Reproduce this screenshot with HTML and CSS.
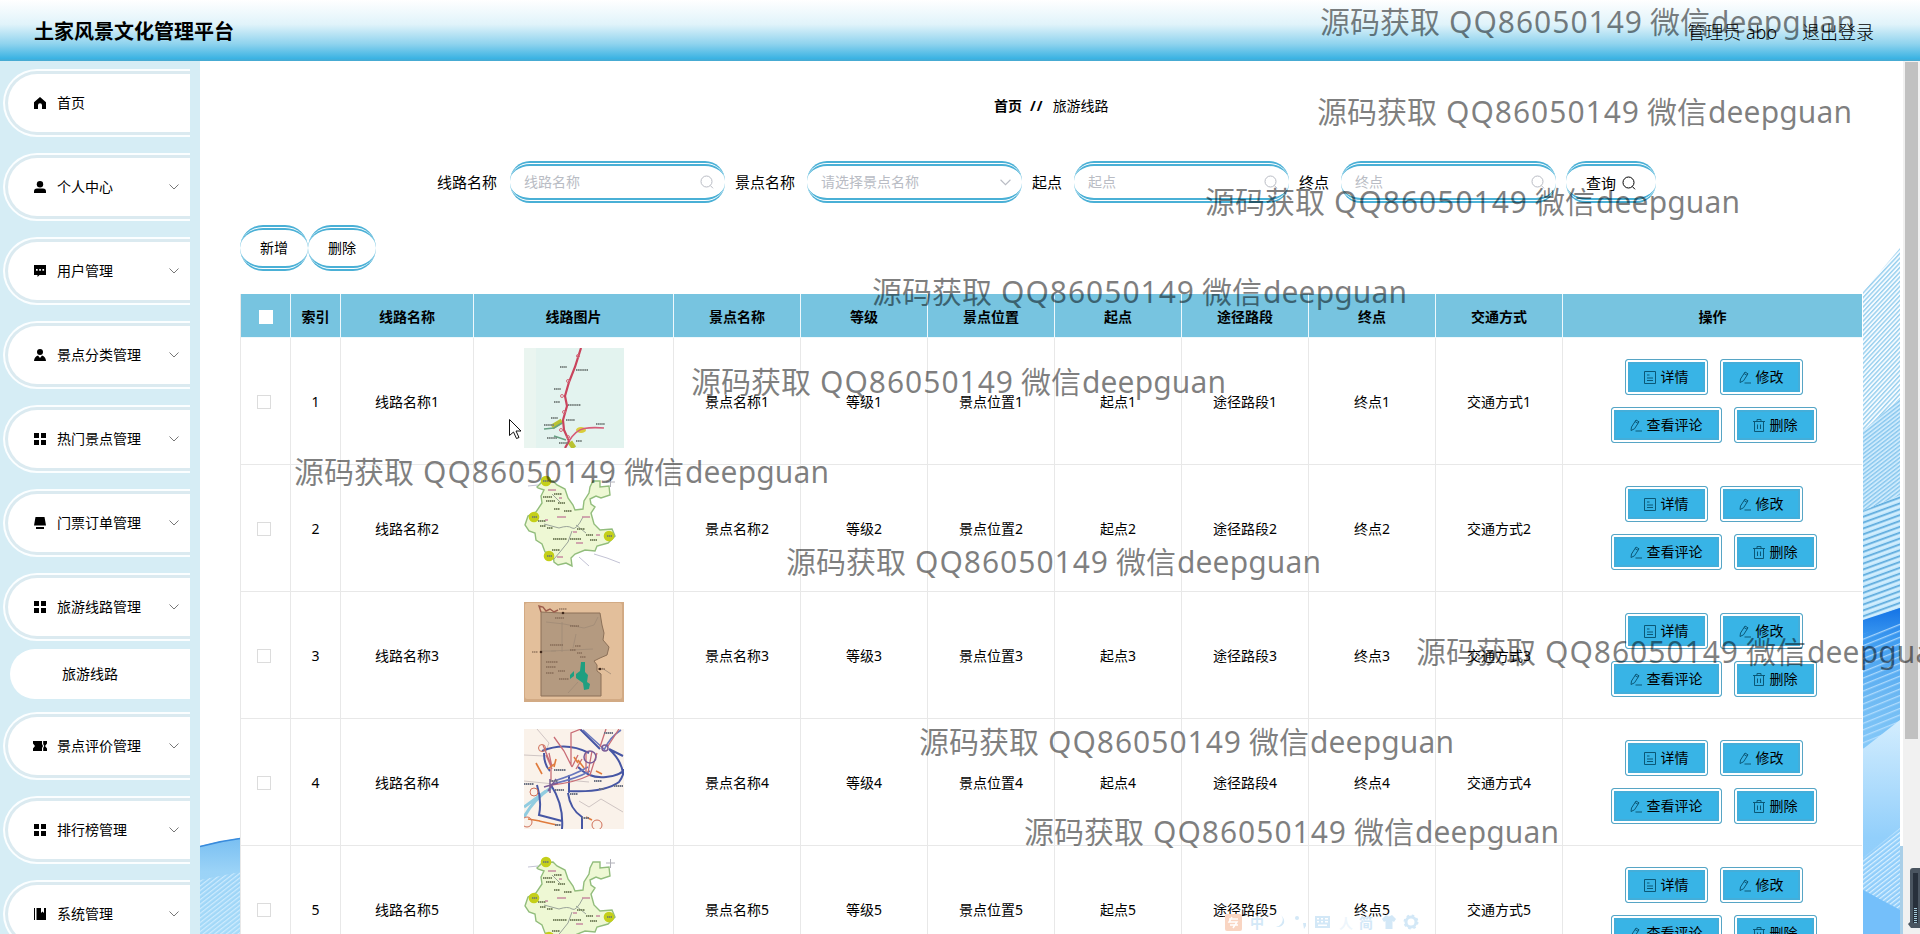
FILE: index.html
```
<!DOCTYPE html>
<html lang="zh-CN">
<head>
<meta charset="utf-8">
<title>土家风景文化管理平台</title>
<link rel="stylesheet" href="styles.css">
</head>
<body>
<svg class="defs" width="0" height="0">
  <defs>
    <symbol id="i-home" viewBox="0 0 12 12"><path d="M6 0 12 5.2V12H8V8.2a2 2 0 0 0-4 0V12H0V5.2z"/></symbol>
    <symbol id="i-user" viewBox="0 0 12 12"><circle cx="6" cy="3.2" r="3.2"/><path d="M0 12V10.500q0-3 3-3h6q3 0 3 3V12z"/></symbol>
    <symbol id="i-chat" viewBox="0 0 12 12"><path fill-rule="evenodd" d="M0 0H12V10H5.500L3.500 12V10H0zM2 4v1.700h1.700V4zM5.200 4v1.700h1.700V4zM8.400 4v1.700h1.700V4z"/></symbol>
    <symbol id="i-guide" viewBox="0 0 12 12"><circle cx="6" cy="3" r="3"/><path d="M0 12Q.3 7.500 4 6.500L6 9 8 6.500Q11.700 7.500 12 12z"/></symbol>
    <symbol id="i-grid" viewBox="0 0 12 12"><path d="M0 0h5v5H0zM7 0h5v5H7zM0 7h5v5H0zM7 7h5v5H7z"/></symbol>
    <symbol id="i-desk" viewBox="0 0 12 12"><path d="M1.500 0h9L12 8.500H0zM2 10h8v2H2z"/></symbol>
    <symbol id="i-ticket" viewBox="0 0 14 10"><path fill-rule="evenodd" d="M0 0H14V2.500L12 5l2 2.500V10H0V7.500L2 5 0 2.500zM9 0v3l1 2-1 2v3h1.200V7l1-2-1-2V0z"/></symbol>
    <symbol id="i-book" viewBox="0 0 12 12"><path d="M0 0h1v12H0zM2.500 0H7v5l1.500-1.500L10 5V0h2v12H2.500z"/></symbol>
    <symbol id="i-down" viewBox="0 0 10 6"><path d="M.5.5 5 5 9.500.5" fill="none" stroke="currentColor"/></symbol>
    <symbol id="i-search" viewBox="0 0 14 14"><g fill="none" stroke="currentColor"><circle cx="6.500" cy="6.500" r="5.500"/><path d="M10.300 10.500 13 13.300"/></g></symbol>
    <symbol id="i-doc" viewBox="0 0 12 13"><g fill="none" stroke="currentColor"><path d="M.5.500h11v12H.5zM3 4h2.500M3 7h6M3 9.500h6"/></g></symbol>
    <symbol id="i-edit" viewBox="0 0 12 13"><g fill="none" stroke="currentColor"><path d="M1.500 8 6 1l3 1.800-4.500 7L1 11.500zM5 2.500 8 4.300M5.500 12H12"/></g></symbol>
    <symbol id="i-trash" viewBox="0 0 12 13"><g fill="none" stroke="currentColor"><path d="M0 2.500h12M1.500 2.500v10h9v-10M4 2.500V.5h4v2M4.500 5.500v4.500M7.500 5.500v4.500"/></g></symbol>

    <symbol id="map-rail" viewBox="0 0 100 100">
      <rect width="100" height="100" fill="#e3f3ef"/><rect width="12" height="100" fill="#eaf5f0"/>
      <path d="M38 73 28 79M46 94 50 100" stroke="#b9c232" stroke-width="5"/>
      <ellipse cx="57" cy="82" rx="5" ry="3" fill="#d9cc3a"/>
      <path d="M57 0 51 19 45 34 41 48 43 58 39 72 40 82 45 93 41 100" fill="none" stroke="#c9435c" stroke-width="2.200"/>
      <path d="M45 93Q52 82 60 80.500T80 80" fill="none" stroke="#d65c78" stroke-width="1.600"/>
      <path d="M20 81 30 80 38 75M30 88l12 4" fill="none" stroke="#67a184" stroke-width="1.500"/>
      <g stroke="#7b8582" stroke-width="2" stroke-dasharray="1.500 .6"><path d="M36 19h7M52 22h12M30 41h7M30 54h6M44 57h13M42 72h9M27 70h7M20 77h10M23 90h10M72 76h9M35 95h9M52 93h6" /></g>
      <g fill="none" stroke="#d36a7b"><circle cx="54" cy="8" r="1.500"/><circle cx="44" cy="33" r="1.500"/><circle cx="38" cy="48" r="1.500"/><circle cx="40" cy="64" r="1.500"/><circle cx="37" cy="82" r="1.500"/><circle cx="44" cy="89" r="1.500"/></g>
    </symbol>
    <symbol id="map-green" viewBox="0 0 100 100">
      <rect width="100" height="100" fill="#fff"/>
      <path d="M13 12 18 7 29 6l4 4 8 4 3 9 5 7 2 5 8-1 1-8 5-8 1-6 3-6h7v6l9-1 1 9-9 3-5-2-6 3 1 5 4 3-4 6 3 11 6 6 12-1 3 7-7 7-11 3-2 5-10-1-10 4-4 4 1 8-6-3-8 2-4-3-1-8-8-2-3-8-6-4-1-7-6-2-4-6 3-9 8-4 6-9-1-7 3-6-6-2z" fill="#eef8d4" stroke="#92bd7c" stroke-width="1.400"/>
      <path d="M20 49 35 53Q44 50 48 53T59 42M48 56 44 67 36 77 30 84M52 50l10 8M28 19l8 8" fill="none" stroke="#9aa399"/>
      <path d="M4 11 14 10M55 82l10 9M70 79l13 4 13 5" fill="none" stroke="#c3c3d5"/>
      <g fill="#c4cf19"><circle cx="22" cy="6" r="5.300"/><circle cx="10" cy="42" r="5.300"/><circle cx="85" cy="61" r="5.300"/><circle cx="25" cy="81" r="5.300"/></g>
      <g stroke="#7c8863" stroke-width="1.800" stroke-dasharray="1.500 .5"><path d="M19 22h9M22 26h9M30 19h8M34 28h7M30 34h6M40 36h8M14 46h8M16 51h6M23 53h6M53 54h8M62 60h7M46 64h11M66 65h7M29 64h14M28 75h8M19 6h6M8 42h5M83 61h5M23 81h5"/></g>
      <g stroke="#c78aa0" stroke-width="1.300"><path d="M24 15h8M21 45h3M33 42h9M58 42h8M49 57h4M72 60h4M33 82h6M52 68h7M35 23h3"/></g>
      <path d="M82 7h9M86.500 3v9" stroke="#b0b0b8"/>
    </symbol>
    <symbol id="map-old" viewBox="0 0 100 100">
      <rect width="100" height="100" fill="#d2aa84"/><rect x="1" y="1" width="97" height="96" rx="2" fill="#e3bf9b"/>
      <path d="M17 10 38 11H76l2 12 2 8-1 7 6 7-2 8-7 3-6 3 3 4v6l4 3v22H17z" fill="#b49a80" stroke="#8c7159"/>
      <path d="M17 10 15 4l4 1 3 4 4-2 4 3 4-2" fill="none" stroke="#9c5c4c" stroke-width="1.400"/>
      <path d="M38 20V50M22 20l18 2 20 4 10-3 4-8M27 49l42-2M52 32 49 46M54 80 44 91M17 49h15M78 66l9 6" fill="none" stroke="#a08a76" stroke-width=".8"/>
      <path d="M57 60h4v10l3 3-1 7 3 2-1 5-5 1-1-7-7-5v-4l4-3zM46 73l4-4v5l-4 3z" fill="#1f9f80"/>
      <g stroke="#705643" stroke-width="1.200" stroke-dasharray="1.500 .5"><path d="M31 16h9M46 24h9M26 43h13M46 48h6M51 44h6M53 51h5M56 55h6M22 60h12M22 65h10M34 69h7M22 71h8M35 77h10M8 50h6M35 7h8M74 67h7"/></g>
      <circle cx="39" cy="11" r="1.300" fill="#40291c"/><circle cx="17" cy="50" r="1.300" fill="#40291c"/><circle cx="76" cy="67" r="1.300" fill="#40291c"/>
    </symbol>
    <symbol id="map-war" viewBox="0 0 100 100">
      <rect width="100" height="100" fill="#faf2ea"/>
      <path d="M0 26 20 27 25 14 13 0M0 52l30 3 13-4 22 2M55 72l10 6 12-8 22 13" fill="none" stroke="#cfc5c3"/>
      <path d="M0 88Q10 70 28 58M0 78 22 62" stroke="#91cce0" stroke-width="3" fill="none"/>
      <path d="M13 56Q18 72 15 86L38 92M27 56Q40 76 38 100M44 64Q46 80 58 88V100M44 62Q80 64 95 53 100 46 100 40M54 38Q66 50 82 48T100 40M18 22Q42 12 65 24M45 46V64M20 24Q20 36 26 42M76 20Q66 10 56 0M85 20Q98 32 99 45M85 20 99 27" fill="none" stroke="#4656a4" stroke-width="2"/>
      <path d="M28 55Q52 50 66 42M30 52Q50 46 64 38M80 21Q86 8 97 1M59 1l22 20" fill="none" stroke="#6877bd" stroke-width="1.600"/>
      <path d="M27 56Q50 54 66 46M27 53V36l-8-20M62 23v20M68 22l-4 22M73 24l-7 22M54 26l-6 12M47 36V4l10-4M82 0l-6 18M95 0 84 17M30 8l10 14 8 16M22 26l6 14M25 24l3 14M58 30l-6 10" fill="none" stroke="#c96d76" stroke-width="1.300"/>
      <path d="M12 34l6 11M54 31l6 8M72 42l6 3M15 92l18 4M62 88l6 3M4 90l12 2M24 40l6-5M32 30l-2 8M50 28l4 6" fill="none" stroke="#e07b3c" stroke-width="1.600"/>
      <g fill="none" stroke="#d0715a"><circle cx="18" cy="19" r="3.500"/><circle cx="10" cy="63" r="4"/><circle cx="3" cy="93" r="5"/><circle cx="73" cy="96" r="5"/></g>
      <g fill="none" stroke="#7a5c96" stroke-width="1.500"><circle cx="66" cy="28" r="6"/><circle cx="81" cy="19" r="3"/><path d="M20 58 34 54M24 62 32 50M26 50v14"/></g>
      <g stroke="#6d7383" stroke-width="1.800" stroke-dasharray="1.500 .5"><path d="M30 41h12M31 61h9M70 52h8M75 60h5M26 52h8M0 55h10M46 65h8M90 57h9M31 96h6M58 89h7M80 4h9"/></g>
    </symbol>
    <pattern id="hatch-steep" width="3.200" height="3.200" patternUnits="userSpaceOnUse" patternTransform="rotate(-47)"><rect width="3.200" height="1.400" fill="#98cfee"/></pattern>
    <pattern id="hatch-soft" width="3.200" height="3.200" patternUnits="userSpaceOnUse" patternTransform="rotate(-38)"><rect width="3.200" height="1.400" fill="#8ac8ee"/></pattern>
    <pattern id="hatch-flat" width="5.500" height="5.500" patternUnits="userSpaceOnUse" patternTransform="rotate(-20)"><rect width="5.500" height="1.600" fill="#5eabdd"/><rect y="3" width="5.500" height="1" fill="#e0f4ff"/></pattern>
    <pattern id="hatch-white" width="3.600" height="3.600" patternUnits="userSpaceOnUse" patternTransform="rotate(-38)"><rect width="3.600" height="1.200" fill="#d9f0ff"/></pattern>
    <pattern id="hatch-deep" width="6" height="6" patternUnits="userSpaceOnUse" patternTransform="rotate(-22)"><rect width="6" height="1.300" fill="#bfe3ff"/></pattern>
    <linearGradient id="deep" x1="0" y1="0" x2="0" y2="1"><stop offset="0" stop-color="#1473e6"/><stop offset=".2" stop-color="#3f9cf0"/><stop offset=".55" stop-color="#6db9f3"/><stop offset="1" stop-color="#8fd0fb"/></linearGradient>
    <linearGradient id="pale" x1="0" y1="0" x2="0" y2="1"><stop offset="0" stop-color="#d3edfe"/><stop offset=".55" stop-color="#92cffb"/><stop offset="1" stop-color="#8ecbf9"/></linearGradient>
    <linearGradient id="wave" x1="0" y1="0" x2="0" y2="1"><stop offset="0" stop-color="#79bff2"/><stop offset=".35" stop-color="#9bd3f7"/><stop offset="1" stop-color="#a5daf8"/></linearGradient>
  </defs>
</svg>

<header class="topbar">
  <h1 class="brand">土家风景文化管理平台</h1>
  <div class="account"><span>管理员 abo</span><span>退出登录</span></div>
</header>

<div class="shell">
  <nav class="sidebar">
    <a class="item"><svg class="ico"><use href="#i-home"/></svg><span>首页</span></a>
    <a class="item"><svg class="ico"><use href="#i-user"/></svg><span>个人中心</span><svg class="arrow"><use href="#i-down"/></svg></a>
    <a class="item"><svg class="ico"><use href="#i-chat"/></svg><span>用户管理</span><svg class="arrow"><use href="#i-down"/></svg></a>
    <a class="item"><svg class="ico"><use href="#i-guide"/></svg><span>景点分类管理</span><svg class="arrow"><use href="#i-down"/></svg></a>
    <a class="item"><svg class="ico"><use href="#i-grid"/></svg><span>热门景点管理</span><svg class="arrow"><use href="#i-down"/></svg></a>
    <a class="item"><svg class="ico"><use href="#i-desk"/></svg><span>门票订单管理</span><svg class="arrow"><use href="#i-down"/></svg></a>
    <a class="item open"><svg class="ico"><use href="#i-grid"/></svg><span>旅游线路管理</span><svg class="arrow"><use href="#i-down"/></svg></a>
    <a class="subitem">旅游线路</a>
    <a class="item"><svg class="ico wide"><use href="#i-ticket"/></svg><span>景点评价管理</span><svg class="arrow"><use href="#i-down"/></svg></a>
    <a class="item"><svg class="ico"><use href="#i-grid"/></svg><span>排行榜管理</span><svg class="arrow"><use href="#i-down"/></svg></a>
    <a class="item"><svg class="ico"><use href="#i-book"/></svg><span>系统管理</span><svg class="arrow"><use href="#i-down"/></svg></a>
  </nav>

  <main class="page">
    <svg class="backdrop" viewBox="200 61 1703 873">
      <path d="M1863 292 1900 248V410L1863 440z" fill="#f5fbff"/><path d="M1863 292 1900 248V410L1863 440z" fill="url(#hatch-steep)"/>
      <path d="M1863 431 1900 399V500L1863 513z" fill="#cdeafc"/><path d="M1863 431 1900 399V500L1863 513z" fill="url(#hatch-soft)"/>
      <path d="M1863 511 1900 495V612L1863 625z" fill="#bfe5fb"/><path d="M1863 511 1900 495V612L1863 625z" fill="url(#hatch-flat)"/>
      <path d="M1863 620 1900 608V760L1863 770z" fill="url(#deep)"/><path d="M1863 634 1900 622V725L1863 755z" fill="url(#hatch-deep)" opacity=".8"/>
      <path d="M1863 749 1900 720V934H1863z" fill="url(#pale)"/>
      <path d="M1863 858 1900 828V910L1863 890z" fill="url(#hatch-white)"/>
      <path d="M1863 890 1900 910V934H1863z" fill="#74bffa"/>
      <path d="M1900 846h3v88h-3z" fill="#a9cfe8"/>
      <path d="M200 846Q220 841 240 838V934H200z" fill="url(#wave)"/>
      <path d="M200 880 240 872V934H200z" fill="url(#hatch-white)" opacity=".8"/>
      <path d="M200 846.500Q220 841 240 838.500" fill="none" stroke="#398bdc" stroke-width="1.500"/>
    </svg>

    <div class="content">
      <div class="crumbs"><b>首页</b><b class="sep">//</b><span>旅游线路</span></div>

      <div class="search">
        <label>线路名称</label>
        <div class="field"><span>线路名称</span><svg class="lens"><use href="#i-search"/></svg></div>
        <label class="next">景点名称</label>
        <div class="field"><span>请选择景点名称</span><svg class="caret"><use href="#i-down"/></svg></div>
        <label class="next">起点</label>
        <div class="field"><span>起点</span><svg class="lens"><use href="#i-search"/></svg></div>
        <label class="next">终点</label>
        <div class="field"><span>终点</span><svg class="lens"><use href="#i-search"/></svg></div>
        <div class="query"><span>查询</span><svg class="lens"><use href="#i-search"/></svg></div>
      </div>

      <div class="tools"><div class="pill">新增</div><div class="pill">删除</div></div>

      <div class="table">
        <div class="row head">
          <div><i class="box"></i></div><div>索引</div><div>线路名称</div><div>线路图片</div><div>景点名称</div><div>等级</div><div>景点位置</div><div>起点</div><div>途径路段</div><div>终点</div><div>交通方式</div><div>操作</div>
        </div>
        <div class="row">
          <div><i class="box"></i></div><div>1</div><div>线路名称1</div><div><svg class="photo"><use href="#map-rail"/></svg></div><div>景点名称1</div><div>等级1</div><div>景点位置1</div><div>起点1</div><div>途径路段1</div><div>终点1</div><div>交通方式1</div>
          <div class="ops"><a class="btn"><svg><use href="#i-doc"/></svg>详情</a><a class="btn"><svg><use href="#i-edit"/></svg>修改</a><a class="btn"><svg><use href="#i-edit"/></svg>查看评论</a><a class="btn"><svg><use href="#i-trash"/></svg>删除</a></div>
        </div>
        <div class="row">
          <div><i class="box"></i></div><div>2</div><div>线路名称2</div><div><svg class="photo"><use href="#map-green"/></svg></div><div>景点名称2</div><div>等级2</div><div>景点位置2</div><div>起点2</div><div>途径路段2</div><div>终点2</div><div>交通方式2</div>
          <div class="ops"><a class="btn"><svg><use href="#i-doc"/></svg>详情</a><a class="btn"><svg><use href="#i-edit"/></svg>修改</a><a class="btn"><svg><use href="#i-edit"/></svg>查看评论</a><a class="btn"><svg><use href="#i-trash"/></svg>删除</a></div>
        </div>
        <div class="row">
          <div><i class="box"></i></div><div>3</div><div>线路名称3</div><div><svg class="photo"><use href="#map-old"/></svg></div><div>景点名称3</div><div>等级3</div><div>景点位置3</div><div>起点3</div><div>途径路段3</div><div>终点3</div><div>交通方式3</div>
          <div class="ops"><a class="btn"><svg><use href="#i-doc"/></svg>详情</a><a class="btn"><svg><use href="#i-edit"/></svg>修改</a><a class="btn"><svg><use href="#i-edit"/></svg>查看评论</a><a class="btn"><svg><use href="#i-trash"/></svg>删除</a></div>
        </div>
        <div class="row">
          <div><i class="box"></i></div><div>4</div><div>线路名称4</div><div><svg class="photo"><use href="#map-war"/></svg></div><div>景点名称4</div><div>等级4</div><div>景点位置4</div><div>起点4</div><div>途径路段4</div><div>终点4</div><div>交通方式4</div>
          <div class="ops"><a class="btn"><svg><use href="#i-doc"/></svg>详情</a><a class="btn"><svg><use href="#i-edit"/></svg>修改</a><a class="btn"><svg><use href="#i-edit"/></svg>查看评论</a><a class="btn"><svg><use href="#i-trash"/></svg>删除</a></div>
        </div>
        <div class="row">
          <div><i class="box"></i></div><div>5</div><div>线路名称5</div><div><svg class="photo"><use href="#map-green"/></svg></div><div>景点名称5</div><div>等级5</div><div>景点位置5</div><div>起点5</div><div>途径路段5</div><div>终点5</div><div>交通方式5</div>
          <div class="ops"><a class="btn"><svg><use href="#i-doc"/></svg>详情</a><a class="btn"><svg><use href="#i-edit"/></svg>修改</a><a class="btn"><svg><use href="#i-edit"/></svg>查看评论</a><a class="btn"><svg><use href="#i-trash"/></svg>删除</a></div>
        </div>
      </div>
    </div>
  </main>
  <div class="scroll"><div class="thumb"></div></div>
</div>

<svg class="overlay" viewBox="0 0 1920 934">
  <g class="mark">
    <text x="1320" y="33">源码获取 <tspan x="1449" textLength="193">QQ86050149</tspan> <tspan x="1650">微信</tspan><tspan x="1711" textLength="144">deepguan</tspan></text>
    <text x="1317" y="123">源码获取 <tspan x="1446" textLength="193">QQ86050149</tspan> <tspan x="1647">微信</tspan><tspan x="1708" textLength="144">deepguan</tspan></text>
    <text x="1205" y="213">源码获取 <tspan x="1334" textLength="193">QQ86050149</tspan> <tspan x="1535">微信</tspan><tspan x="1596" textLength="144">deepguan</tspan></text>
    <text x="872" y="303">源码获取 <tspan x="1001" textLength="193">QQ86050149</tspan> <tspan x="1202">微信</tspan><tspan x="1263" textLength="144">deepguan</tspan></text>
    <text x="691" y="393">源码获取 <tspan x="820" textLength="193">QQ86050149</tspan> <tspan x="1021">微信</tspan><tspan x="1082" textLength="144">deepguan</tspan></text>
    <text x="294" y="483">源码获取 <tspan x="423" textLength="193">QQ86050149</tspan> <tspan x="624">微信</tspan><tspan x="685" textLength="144">deepguan</tspan></text>
    <text x="786" y="573">源码获取 <tspan x="915" textLength="193">QQ86050149</tspan> <tspan x="1116">微信</tspan><tspan x="1177" textLength="144">deepguan</tspan></text>
    <text x="1416" y="663">源码获取 <tspan x="1545" textLength="193">QQ86050149</tspan> <tspan x="1746">微信</tspan><tspan x="1807" textLength="144">deepguan</tspan></text>
    <text x="919" y="753">源码获取 <tspan x="1048" textLength="193">QQ86050149</tspan> <tspan x="1249">微信</tspan><tspan x="1310" textLength="144">deepguan</tspan></text>
    <text x="1024" y="843">源码获取 <tspan x="1153" textLength="193">QQ86050149</tspan> <tspan x="1354">微信</tspan><tspan x="1415" textLength="144">deepguan</tspan></text>
  </g>
  <path d="M509.500 419.500v16l4-3.500 3 6.500 2.500-1-3-6.500h5z" fill="#fff" stroke="#111"/>
  <g class="ime">
    <rect x="1225" y="914" width="17" height="17" rx="2" fill="#f9d5c2"/><path d="M1229 919h9M1232 917l-3 5h8l-4 6M1230 925h8" stroke="#fff" stroke-width="1.500" fill="none"/>
    <text x="1250" y="928">中</text>
    <path d="M1281 915a7 7 0 0 1-8 11q8 3 11-3 1-4-3-8z"/>
    <circle cx="1297" cy="918" r="2"/><path d="M1303 923h3v3l-2 3z"/>
    <path fill-rule="evenodd" d="M1315 916h15v12h-15zM1317 918v1.500h2V918zM1321 918v1.500h2V918zM1325 918v1.500h3V918zM1317 921v1.500h2V921zM1321 921v1.500h2V921zM1325 921v1.500h3V921zM1318 924.500v1.500h9v-1.500z"/>
    <text class="faint" x="1339" y="928">人</text><text x="1359" y="928">简</text>
    <path d="M1386 915 1382 919l2 3 1.500-1v8h7v-8l1.500 1 2-3-4-4-3 1.500z"/>
    <circle cx="1411" cy="922" r="5" fill="none" stroke="#d3e8f7" stroke-width="3"/><circle cx="1411" cy="922" r="6.500" fill="none" stroke="#d3e8f7" stroke-width="2" stroke-dasharray="2.500 2.600"/>
  </g>
  <path d="M1920 868h-7q-3 0-3 3v51l-2 2 3 4h9z" fill="#4a5560"/><rect x="1913" y="873" width="5" height="50" fill="#27303b"/><path d="M1915.500 908v16" stroke="#a5c9d8" stroke-width="3" stroke-dasharray="1 1"/>
</svg>
</body>
</html>
```
FILE: styles.css
```
* { box-sizing: border-box; }
body {
  margin: 0;
  width: 1920px;
  height: 934px;
  overflow: hidden;
  background: #fff;
  color: #000;
  font: 14px/20px "Noto Sans", "Noto Sans CJK SC", sans-serif;
}
.defs { position: absolute; }
.topbar {
  height: 61px;
  padding: 2px 46px 0 34px;
  display: flex;
  align-items: center;
  justify-content: space-between;
  background: linear-gradient(180deg, #fff 0%, #e0f3fa 40%, #8fd3ee 72%, #3bb3e3 96%, #4aa9cf 100%);
}
.brand { margin: 0; font-size: 20px; line-height: 30px; font-weight: 700; }
.account { display: flex; gap: 25px; font-size: 18px; line-height: 26px; font-weight: 300; }

.shell { display: flex; height: 873px; overflow: hidden; }
.sidebar {
  flex: none;
  width: 200px;
  padding: 8px 10px 0 3px;
  background: #d6edf5;
  overflow: hidden;
}
.item {
  display: flex;
  align-items: center;
  height: 68px;
  margin-bottom: 16px;
  padding: 3px 0 3px 3px;
  border: 2px solid #fbfeff;
  border-right: 0;
  border-radius: 34px 0 0 34px;
  background: linear-gradient(#fff, #fff) content-box, #dbeaf0 padding-box;
}
.item.open { margin-bottom: 8px; }
.ico { width: 12px; height: 12px; margin: 0 11px 0 26px; }
.ico.wide { width: 14px; height: 10px; margin: 0 10px 0 25px; }
.arrow { width: 10px; height: 6px; margin: 0 11px 0 auto; color: #777; }
.subitem {
  display: flex;
  align-items: center;
  height: 50px;
  margin: 0 0 13px 7px;
  padding-left: 52px;
  background: #fff;
  border-radius: 25px 0 0 25px;
}

.page { position: relative; flex: none; width: 1703px; }
.backdrop { position: absolute; left: 0; top: 0; width: 1703px; height: 873px; }
.content { position: relative; padding: 35px 41px 0 40px; }
.crumbs { display: flex; padding-left: 754px; height: 20px; }
.crumbs .sep { margin: 0 9px 0 8px; letter-spacing: 1px; }

.search { display: flex; align-items: center; margin-top: 45px; padding-left: 197px; font-size: 15px; }
.search label { margin-right: 13px; white-space: nowrap; }
.search .next { margin-left: 10px; margin-right: 12px; }
.field, .query, .pill {
  border: 5px double #4ab0d6;
  border-width: 5px 0;
  border-radius: 20px;
  background: #fff;
}
.field {
  display: flex;
  align-items: center;
  justify-content: space-between;
  width: 215px;
  height: 42px;
  padding: 0 11px 0 14px;
  color: #b9bcc4;
  font-size: 14px;
}
.lens { width: 14px; height: 14px; }
.caret { width: 11px; height: 7px; }
.query {
  display: flex;
  align-items: center;
  justify-content: center;
  gap: 6px;
  width: 90px;
  height: 42px;
  margin-left: 10px;
  padding-top: 2px;
}
.tools { display: flex; margin-top: 22px; }
.pill {
  width: 68px;
  height: 46px;
  border-radius: 24px;
  display: flex;
  align-items: center;
  justify-content: center;
}

.table { margin-top: 23px; border-left: 1px solid #e8e8e8; background: #fff; width: 1622px; }
.row { display: grid; grid-template-columns: 50px 50px 133px 200px repeat(7, 127px) 299px; height: 127px; }
.row > div {
  display: flex;
  align-items: center;
  justify-content: center;
  padding-top: 2px;
  border-right: 1px solid #e8e8e8;
  border-bottom: 1px solid #e8e8e8;
}
.row > div:last-child { border-right: 0; }
.head { height: 44px; background: #77c4e0; font-weight: 700; }
.row.head > div { border-color: #eef8fc; }
.box { width: 14px; height: 14px; margin-right: 3px; border: 1px solid #dcdcdc; background: #fff; }
.head .box { margin-right: 0; border-color: #fff; }
.photo { width: 100px; height: 100px; margin-bottom: 8px; }
.row > .ops { flex-wrap: wrap; align-content: center; gap: 12px; padding: 0 39px 0 41px; }
.btn {
  display: flex;
  align-items: center;
  gap: 5px;
  height: 36px;
  padding: 0 18px;
  border: 1px solid #57a5c5;
  border-radius: 3px;
  background: #38b4e6;
  box-shadow: inset 0 0 0 2px #fff, inset 0 0 0 4px #43aeda;
}
.btn svg { width: 12px; height: 13px; color: #0b5877; }

.scroll { flex: none; width: 17px; padding: 1px 2px; background: #f1f1f1; }
.thumb { height: 677px; background: #c1c1c1; }

.overlay { position: absolute; left: 0; top: 0; width: 1920px; height: 934px; pointer-events: none; }
.mark { fill: #000; fill-opacity: .5; font-size: 30px; }
.ime { fill: #d3e8f7; font-size: 14px; font-weight: 700; }
.ime .faint { fill-opacity: .4; }
```
